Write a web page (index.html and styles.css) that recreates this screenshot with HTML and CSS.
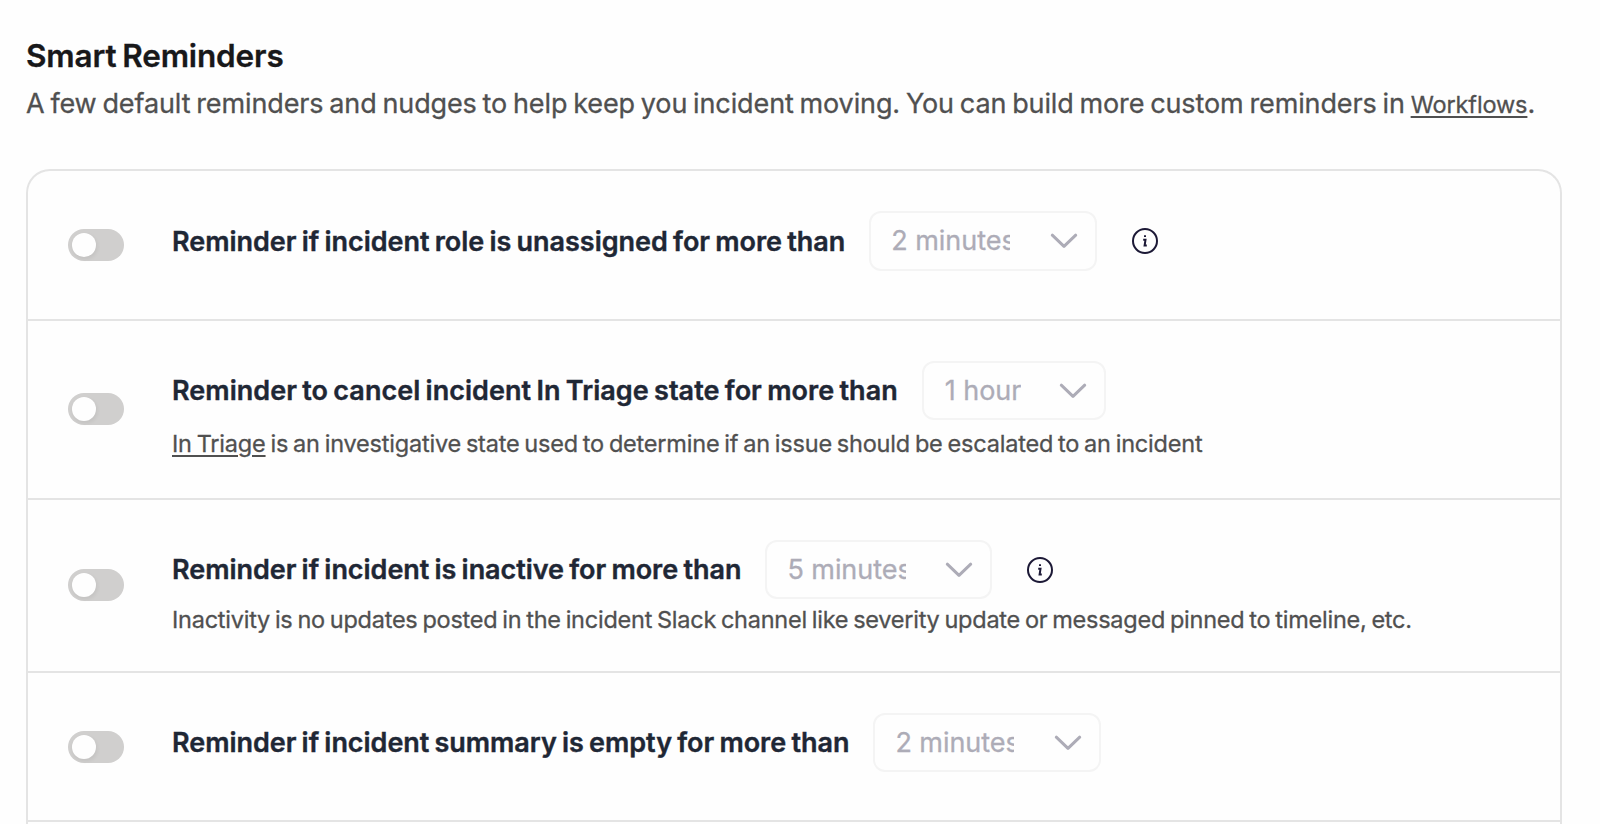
FILE: index.html
```html
<!DOCTYPE html>
<html lang="en">
<head>
<meta charset="utf-8">
<title>Smart Reminders</title>
<link rel="stylesheet" href="styles.css">
</head>
<body>
<svg class="defs" aria-hidden="true">
  <symbol id="chevron" viewBox="0 0 28 16"><path d="M2.3 2.2 14 13.4 25.7 2.2"/></symbol>
  <symbol id="info" viewBox="0 0 28 28"><circle cx="14" cy="14" r="12"/><path class="dot" d="M13 8.2h2v1.9h-2z"/><path class="stem" d="M12.2 12.8h2.3L13.6 18.6h2.2"/></symbol>
</svg>
<main class="page">
  <h1 class="heading">Smart Reminders</h1>
  <p class="intro"><span class="intro-text">A few default reminders and nudges to help keep you incident moving. You can build more custom reminders in</span> <a class="intro-link">Workflows</a>.</p>
  <section class="card">
    <div class="row row-first">
      <span class="toggle"><i class="knob"></i></span>
      <div class="body">
        <div class="line"><h2 class="title t-role">Reminder if incident role is unassigned for more than</h2>
          <div class="select"><span class="value">2 minutes</span><svg class="chevron"><use href="#chevron"/></svg></div>
          <svg class="info"><use href="#info"/></svg></div>
      </div>
    </div>
    <div class="row row-triage">
      <span class="toggle"><i class="knob"></i></span>
      <div class="body">
        <div class="line"><h2 class="title t-triage">Reminder to cancel incident In Triage state for more than</h2>
          <div class="select select-hour"><span class="value">1 hour</span><svg class="chevron"><use href="#chevron"/></svg></div></div>
        <p class="note n-triage"><a class="note-link">In Triage</a> is an investigative state used to determine if an issue should be escalated to an incident</p>
      </div>
    </div>
    <div class="row row-inactive">
      <span class="toggle"><i class="knob"></i></span>
      <div class="body">
        <div class="line"><h2 class="title t-inactive">Reminder if incident is inactive for more than</h2>
          <div class="select"><span class="value">5 minutes</span><svg class="chevron"><use href="#chevron"/></svg></div>
          <svg class="info"><use href="#info"/></svg></div>
        <p class="note n-inactive">Inactivity is no updates posted in the incident Slack channel like severity update or messaged pinned to timeline, etc.</p>
      </div>
    </div>
    <div class="row row-summary">
      <span class="toggle"><i class="knob"></i></span>
      <div class="body">
        <div class="line"><h2 class="title t-summary">Reminder if incident summary is empty for more than</h2>
          <div class="select"><span class="value">2 minutes</span><svg class="chevron"><use href="#chevron"/></svg></div></div>
      </div>
    </div>
  </section>
</main>
</body>
</html>
```
FILE: styles.css
```css
* { box-sizing: border-box; margin: 0; padding: 0; }
body { height: 824px; overflow: hidden; background: #fefefe; color: #505050; font-family: Inter, "Liberation Sans", sans-serif; }
.defs { display: none; }
.page { display: flex; flex-direction: column; height: 824px; padding: 36px 38px 0 26px; }
.heading { flex: none; font-size: 31.5px; font-weight: 600; line-height: 40px; letter-spacing: -0.15px; word-spacing: -2px; color: #18181a; -webkit-text-stroke: 0.3px; }
.intro { flex: none; height: 40px; margin-top: 8px; font-size: 27px; line-height: 40px; letter-spacing: -0.12px; word-spacing: -1.6px; white-space: nowrap; -webkit-text-stroke: 0.3px; }
.intro-link { font-size: 23.5px; text-decoration: underline; text-decoration-thickness: 2px; text-underline-offset: 3px; }
.card { flex: 1; margin-top: 45px; border: 2px solid #e4e4e4; border-bottom: 0; border-radius: 24px 24px 0 0; }
.row { display: flex; align-items: flex-start; gap: 48px; padding: 40px 40px 0; border-bottom: 2px solid #e4e4e4; }
.row-first { height: 150px; }
.row-triage { height: 179px; }
.row-inactive { height: 173px; }
.row-summary { height: 149px; }
.toggle { flex: none; width: 56px; height: 32px; padding: 4px; border-radius: 16px; background: #d0cfce; margin-top: 18px; }
.row-triage .toggle { margin-top: 32px; }
.row-inactive .toggle { margin-top: 29px; }
.knob { display: block; width: 24px; height: 24px; border-radius: 50%; background: #fefefe; box-shadow: 1px 2px 4px rgba(0,0,0,.07); }
.line { display: flex; align-items: center; height: 59px; }
.row-first .line, .row-first .select { height: 60px; }
.title { flex: none; font-size: 27px; font-weight: 600; line-height: 40px; letter-spacing: -0.03px; word-spacing: -1.5px; color: #1f2735; white-space: nowrap; -webkit-text-stroke: 0.4px; }
.t-role { padding-top: 1px; }
.t-triage { letter-spacing: 0.03px; }
.t-inactive { letter-spacing: -0.04px; }
.t-summary { padding-top: 1px; letter-spacing: -0.04px; }
.select { flex: none; display: flex; align-items: center; justify-content: space-between; width: 228px; height: 59px; margin-left: 24px; padding: 0 17px 0 20px; border: 2px solid #f4f4f4; border-radius: 12px; color: #adacb7; }
.row-inactive .select { width: 227px; }
.select-hour { width: 184px; padding-left: 21px; }
.value { width: 119px; overflow: hidden; font-size: 27px; line-height: 40px; letter-spacing: -0.05px; white-space: nowrap; -webkit-text-stroke: 0.3px; }
.select-hour .value { width: 76px; }
.chevron { width: 28px; height: 16px; fill: none; stroke: #adacb7; stroke-width: 3; stroke-linecap: round; stroke-linejoin: round; }
.info { width: 28px; height: 28px; margin-left: 34px; fill: none; stroke: #1c1936; stroke-width: 2; }
.dot { fill: #1c1936; stroke: none; }
.note { font-size: 23.5px; line-height: 34px; letter-spacing: -0.2px; word-spacing: -1.5px; white-space: nowrap; margin-top: 7px; -webkit-text-stroke: 0.3px; }
.n-inactive { margin-top: 4px; letter-spacing: -0.24px; }
.note-link { text-decoration: underline; text-decoration-thickness: 2px; text-underline-offset: 3px; }
```
